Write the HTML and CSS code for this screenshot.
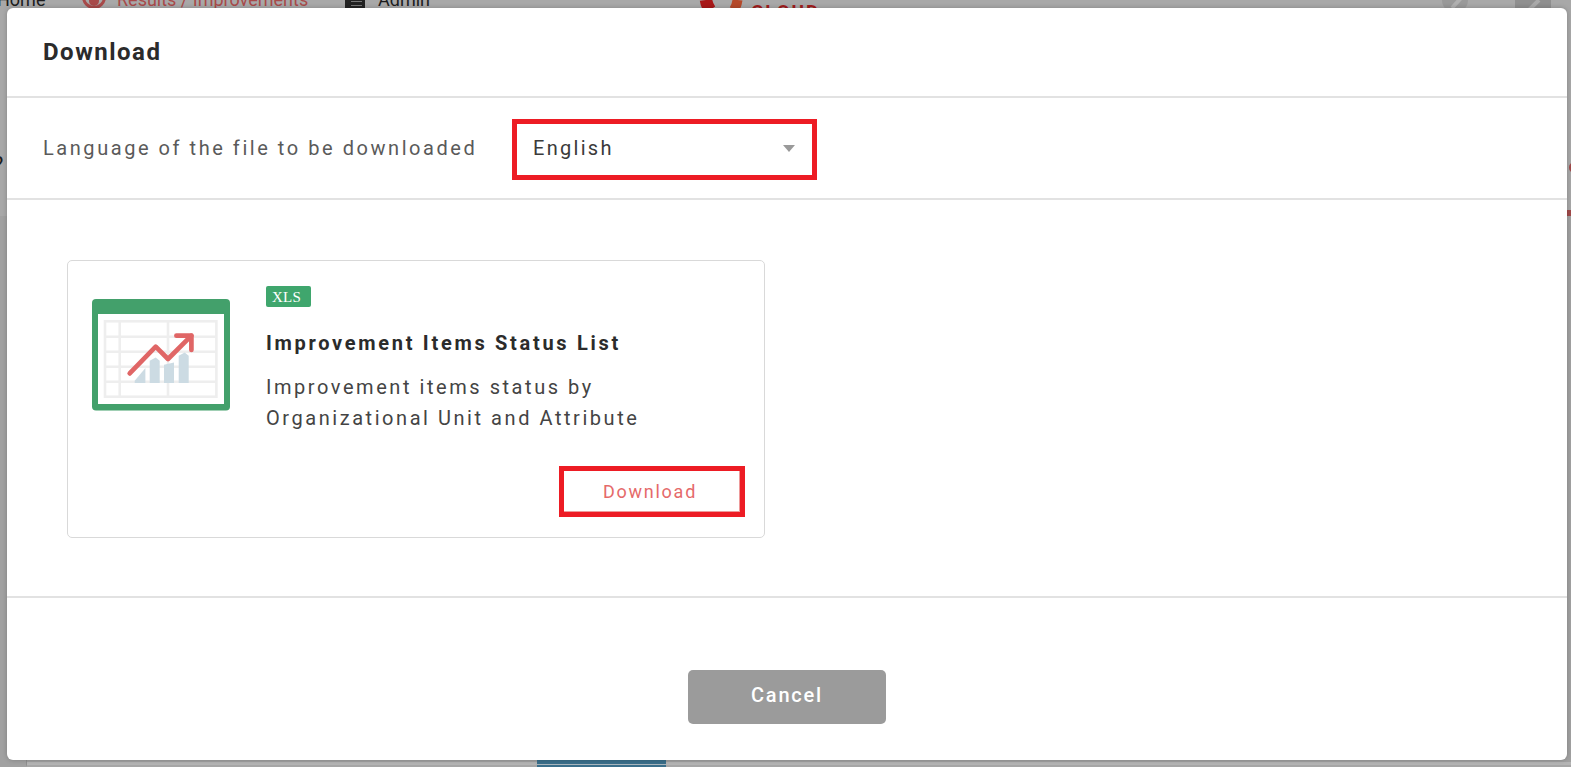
FILE: index.html
```html
<!DOCTYPE html>
<html lang="en">
<head>
<meta charset="utf-8">
<title>Download</title>
<link rel="stylesheet" href="styles.css">
</head>
<body>
<div class="backdrop">
  <span class="bg-lower"></span>
  <nav class="topnav">
    <span class="nav-home">Home</span>
    <svg class="nav-icon" viewBox="0 0 24 24" width="24" height="24"><circle cx="12" cy="12" r="10.500" fill="none" stroke="#a84a4a" stroke-width="3"/><circle cx="12" cy="16" r="5" fill="#a84a4a"/></svg>
    <span class="nav-results">Results / Improvements</span>
    <svg class="nav-list" viewBox="0 0 20 10" width="20" height="10"><rect width="20" height="10" fill="#222"/><path d="M6 2.500H17M6 6.500H17" stroke="#777" stroke-width="1"/></svg>
    <span class="nav-admin">Admin</span>
    <svg class="nav-logo" viewBox="0 0 46 10" width="46" height="10"><path d="M7 0C7.500 4 9 7 11 10" fill="none" stroke="#a81818" stroke-width="12.500"/><path d="M38.500 0C38 4 37 7 35 10" fill="none" stroke="#b5492a" stroke-width="10"/></svg>
    <span class="nav-brand">CLOUD</span>
  </nav>
  <svg class="bg-badge-a" viewBox="0 0 28 12" width="28" height="12"><circle cx="14" cy="0" r="13" fill="#999"/><path d="M11 8L20 -2" stroke="#b0b0b0" stroke-width="4"/></svg>
  <svg class="bg-badge-b" viewBox="0 0 36 10" width="36" height="10"><rect width="36" height="10" fill="#8f8f8f"/><path d="M14 10L24 0" stroke="#a9a9a9" stroke-width="4"/></svg>
  <span class="bg-dot"></span>
  <span class="bg-bar"></span>
  <span class="bg-q">?</span>
  <span class="bg-line"></span>
  <span class="bg-blue"></span>
</div>
<main class="modal">
  <header class="modal-header"><h1 class="modal-title">Download</h1></header>
  <section class="lang-row">
    <label class="lang-label">Language of the file to be downloaded</label>
    <div class="lang-select">
      <span class="lang-value">English</span>
      <span class="caret"></span>
    </div>
  </section>
  <section class="modal-body">
    <article class="card">
      <svg class="card-icon" viewBox="0 0 138 112" width="138" height="112">
        <rect x="0" y="0" width="138" height="111.500" rx="4" fill="#43a06b"/>
        <rect x="6" y="15" width="126" height="90" fill="#fff"/>
        <g fill="none" stroke="#eeeeee" stroke-width="2.600">
          <rect x="13" y="22.300" width="111.400" height="75.400"/>
          <path d="M13 37.700H125M13 52.700H125M13 67.700H125M13 82.700H125M27.700 22V98M76 22V98"/>
        </g>
        <g fill="#ccdbe3">
          <path d="M42.700 84V81.700L53.400 69V84Z"/>
          <path d="M57.700 84V61.700L63.700 58.400L67.700 61.700V84Z"/>
          <path d="M72 84V65.700L82 63.400V84Z"/>
          <path d="M86.700 84V56.700L92.700 53.400L96.700 56.700V84Z"/>
        </g>
        <path d="M37.700 74.400L63.700 47.700L76 60L99.400 36.700" fill="none" stroke="#e06666" stroke-width="4.700" stroke-linecap="round" stroke-linejoin="round"/>
        <path d="M84.400 36.700H99.400V51" fill="none" stroke="#e06666" stroke-width="4.700" stroke-linecap="round" stroke-linejoin="round"/>
      </svg>
      <div class="card-main">
        <span class="badge">XLS</span>
        <h2 class="card-title">Improvement Items Status List</h2>
        <p class="card-desc">Improvement items status by<br>Organizational Unit and Attribute</p>
        <div class="card-actions"><button class="btn-download">Download</button></div>
      </div>
    </article>
  </section>
  <footer class="modal-footer"><button class="btn-cancel">Cancel</button></footer>
</main>
</body>
</html>
```
FILE: styles.css
```css
* { box-sizing: border-box; }
html, body { margin: 0; padding: 0; height: 100%; overflow: hidden; }
body { font-family: Roboto, "Liberation Sans", sans-serif; background: #a8a8a8; color: #2b2b2b; }

.backdrop { position: absolute; inset: 0; background: #a8a8a8; overflow: hidden; }
.bg-lower { position: absolute; left: 0; right: 0; top: 216px; bottom: 0; background: #a1a1a1; }
.topnav { position: absolute; left: 0; right: 0; top: -12px; height: 24px; font-size: 18px; line-height: 24px; }
.nav-home { position: absolute; left: -3px; color: #1c1c1c; }
.nav-icon { position: absolute; left: 82px; top: -3px; }
.nav-results { position: absolute; left: 117px; color: #a84a4a; }
.nav-list { position: absolute; left: 345px; top: 11px; }
.nav-admin { position: absolute; left: 378px; color: #1c1c1c; }
.nav-logo { position: absolute; left: 699px; top: 12px; }
.nav-brand { position: absolute; left: 751px; top: 12px; color: #a01c1c; font-size: 19px; font-weight: 700; letter-spacing: 1.8px; }
.bg-badge-a { position: absolute; left: 1441px; top: 0; }
.bg-badge-b { position: absolute; left: 1515px; top: 0; }
.bg-dot { position: absolute; left: 1569px; top: 162px; width: 11px; height: 11px; border-radius: 50%; background: #a04a4a; }
.bg-bar { position: absolute; left: 1567px; top: 210px; width: 4px; height: 6px; background: #a04a4a; }
.bg-q { position: absolute; left: -7px; top: 153px; font-size: 22px; line-height: 24px; color: #1c1c1c; }
.bg-line { position: absolute; left: 26px; right: 0; top: 760px; height: 7px; border-left: 1px solid #8f8f8f; border-bottom: 2px solid #a6a6a6; box-shadow: inset 0 -3px 0 #b4b4b4; }
.bg-blue { position: absolute; left: 537px; top: 760px; width: 129px; height: 7px; background: linear-gradient(#3a6e8a 0 4px, #a9b6bd 4px 5px, #3a6e8a 5px); }

.modal {
  position: absolute; left: 7px; top: 8px; width: 1560px; height: 752px;
  display: flex; flex-direction: column;
  background: #fff; border-radius: 6px; box-shadow: 0 0 5px rgba(0, 0, 0, .22);
}
.modal-header { height: 90px; display: flex; align-items: center; padding: 0 36px; border-bottom: 2px solid #e2e2e2; flex: none; }
.modal-title { margin: 0; font-size: 24px; font-weight: 700; letter-spacing: 1.5px; color: #2b2b2b; }

.lang-row { height: 102px; display: flex; align-items: center; padding: 0 36px; border-bottom: 2px solid #e2e2e2; flex: none; }
.lang-label { font-size: 20px; letter-spacing: 2.55px; color: #5a5a5a; width: 469px; }
.lang-select {
  width: 305px; height: 61px; margin-top: 2px; border: 5px solid #ed1c24; display: flex; align-items: center; justify-content: space-between;
  padding: 0 16px; font-size: 20px; letter-spacing: 2.3px; color: #3a3a3a;
}
.lang-value { padding-bottom: 2px; }
.caret { width: 0; height: 0; border-left: 6px solid transparent; border-right: 6px solid transparent; border-top: 7px solid #9a9a9a; margin: 0 1px 2px 0; }

.modal-body { height: 398px; padding: 60px 60px 0; border-bottom: 2px solid #e2e2e2; flex: none; }
.card { width: 698px; height: 278px; border: 1px solid #d9d9d9; border-radius: 5px; padding: 25px 20px 0 24px; display: flex; }
.card-icon { flex: none; margin-top: 13px; }
.card-main { margin-left: 36px; flex: 1; display: flex; flex-direction: column; align-items: flex-start; }
.badge { width: 45px; height: 21px; background: #3fa66d; border-radius: 2px; color: #fff; font-family: "Liberation Serif", serif; font-size: 15px; line-height: 23px; text-align: center; letter-spacing: .3px; padding-right: 4px; }
.card-title { margin: 23px 0 0; font-size: 20px; line-height: 26px; font-weight: 700; letter-spacing: 2.7px; color: #2b2b2b; }
.card-desc { margin: 16px 0 0; font-size: 20px; line-height: 31px; letter-spacing: 2.55px; color: #444; }
.card-actions { align-self: stretch; display: flex; justify-content: flex-end; margin-top: 32px; }
.btn-download {
  width: 186px; height: 51px; background: #fff; border: 5px solid #ed1c24; color: #e56a6a;
  font-family: inherit; font-size: 18px; letter-spacing: 1.75px; margin-right: -1px; padding: 0 4px 0 0;
  box-shadow: inset -1px -1px 0 #ee9a9a;
}

.modal-footer { flex: 1; display: flex; justify-content: center; padding-top: 72px; }
.btn-cancel {
  width: 198px; height: 54px; background: #9b9b9b; border: 0; border-radius: 5px; color: #fff;
  font-family: inherit; font-size: 20px; font-weight: 500; letter-spacing: 1.8px; padding: 0 0 5px;
}
```
